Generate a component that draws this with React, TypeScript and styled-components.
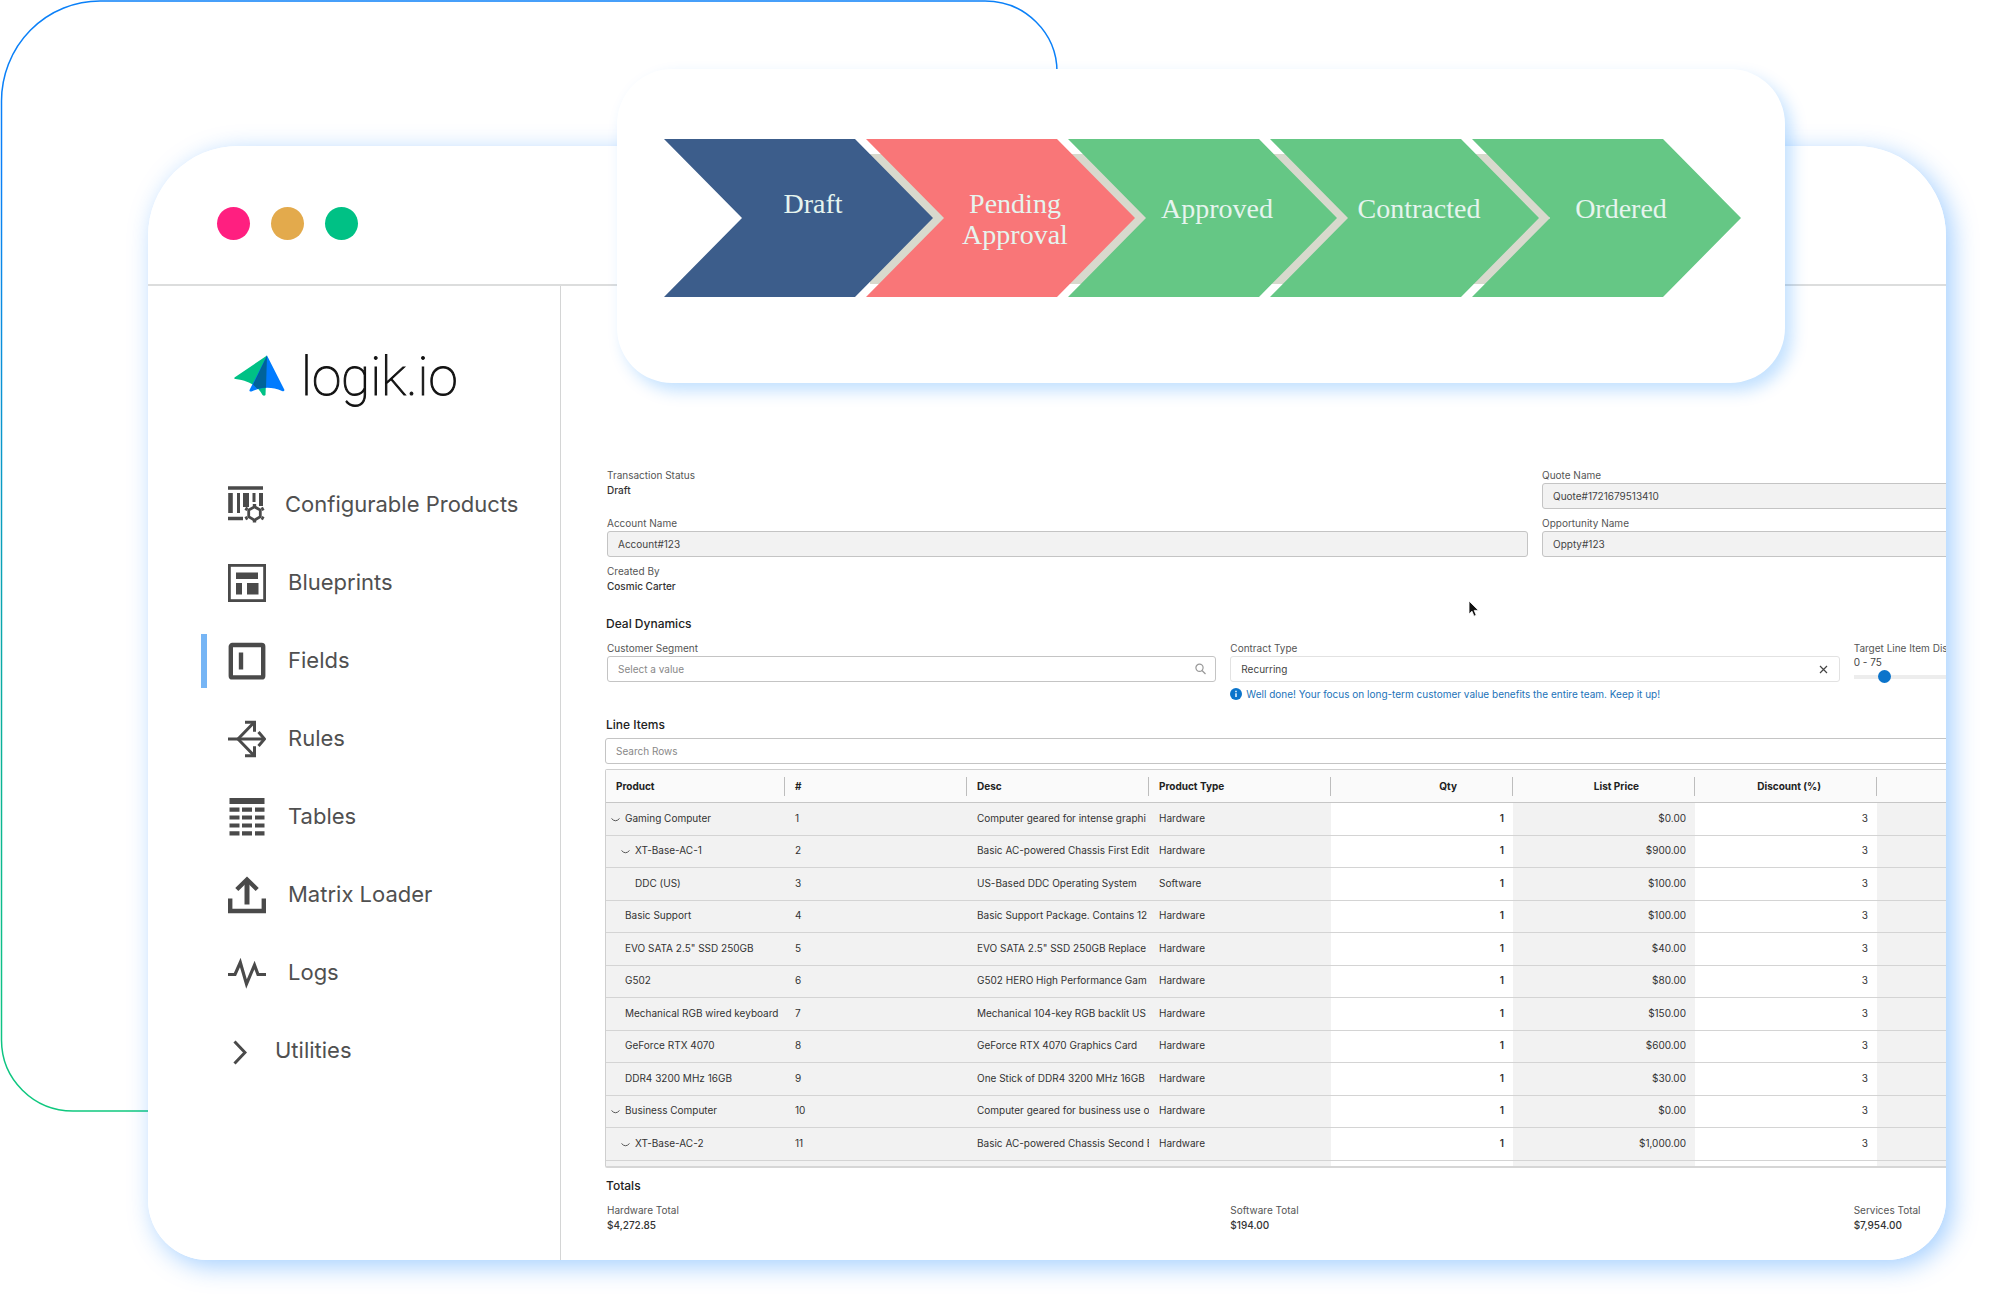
import React from "react";
import styled, { createGlobalStyle } from "styled-components";

const GlobalStyle = createGlobalStyle`
  *, *::before, *::after { box-sizing: border-box; }
  body { margin: 0; background: #fff; font-family: Inter, "Liberation Sans", sans-serif; color: #222; }
  h2, ol, ul, p, dl, dd { margin: 0; padding: 0; }
  ol, ul { list-style: none; }
`;

const Stage = styled.div`
  position: relative;
  padding: 146px 54px 53px 148px;
  overflow: hidden;
`;

const Outline = styled.svg`
  position: absolute;
  top: 0;
  left: 0;
  width: 1058px;
  height: 1112px;
`;

const Window = styled.div`
  position: relative;
  display: flex;
  flex-direction: column;
  overflow: hidden;
  background: #fff;
  border-radius: 90px 90px 60px 60px;
`;

const WindowShadow = styled.div`
  position: relative;
  border-radius: 90px 90px 60px 60px;
  box-shadow: 6px 6px 26px rgba(0, 122, 255, 0.37);
`;

const TitleBar = styled.header`
  display: flex;
  align-items: center;
  gap: 21px;
  height: 140px;
  padding: 17px 69px 0;
  border-bottom: 2px solid #dcdddd;
`;

const Light = styled.span<{ $color: string }>`
  width: 33px;
  height: 33px;
  border-radius: 50%;
  background: ${(p) => p.$color};
`;

const Body = styled.div`
  display: flex;
`;

const Sidebar = styled.aside`
  flex: 0 0 413px;
  border-right: 1px solid #d4d5d5;
`;

const Brand = styled.a`
  display: flex;
  align-items: flex-start;
  gap: 15px;
  height: 180px;
  padding: 61px 0 0 86px;
  color: #111;
  text-decoration: none;
`;

const BrandMark = styled.svg`
  width: 52px;
  height: 42px;
  margin-top: 8px;
`;

const BrandName = styled.span`
  font-family: Roboto, sans-serif;
  font-weight: 100;
  font-size: 53px;
  line-height: 60px;
  -webkit-text-stroke: 1px #111;
`;

const NavItem = styled.a<{ $active?: boolean; $gap: number; $indent: number }>`
  position: relative;
  display: flex;
  align-items: center;
  gap: ${(p) => p.$gap}px;
  height: 78px;
  padding-left: ${(p) => p.$indent}px;
  color: #505050;
  font-size: 22px;
  font-weight: 400;
  text-decoration: none;

  &::before {
    content: "";
    position: absolute;
    left: 53px;
    width: 6px;
    height: 54px;
    background: ${(p) => (p.$active ? "#76b5f5" : "transparent")};
  }
`;

const NavLabel = styled.span`
  padding-bottom: 3px;
`;

const NavIcon = styled.svg<{ $w: number }>`
  flex: none;
  width: ${(p) => p.$w}px;
  height: 38px;
  fill: none;
  stroke: #4a4a4a;
`;

const Panel = styled.main`
  position: relative;
  flex: 1;
  min-width: 0;
  overflow: hidden;
  padding: 182px 0 27px 44px;
`;

const Sheet = styled.div`
  display: flex;
  flex-direction: column;
  width: 1860px;
`;

const Section = styled.section<{ $gap: number; $before: number }>`
  display: flex;
  flex-direction: column;
  gap: ${(p) => p.$gap}px;
  padding-top: ${(p) => p.$before}px;
`;

const SectionTitle = styled.h2`
  font-size: 12px;
  line-height: 20px;
  font-weight: 500;
  color: #222;
  padding-left: 1px;
`;

const FieldGrid = styled.div<{ $cols: number }>`
  display: grid;
  grid-template-columns: repeat(${(p) => p.$cols}, 1fr);
  gap: 7px 14px;
  padding: 0 2px;
`;

const Field = styled.div`
  display: flex;
  flex-direction: column;
  min-width: 0;
`;

const Label = styled.label`
  font-size: 10px;
  line-height: 15px;
  color: #555;
`;

const Value = styled.output`
  font-size: 10px;
  line-height: 15px;
  font-weight: 500;
  color: #333;
`;

const Box = styled.div<{ $tone: "locked" | "open" | "soft" }>`
  display: flex;
  align-items: center;
  height: 26px;
  padding: 0 9px 0 10px;
  border-radius: 3px;
  border: 1px solid ${(p) => (p.$tone === "soft" ? "#e2e2e2" : "#c4c4c4")};
  background: ${(p) => (p.$tone === "locked" ? "#f2f2f2" : "#fff")};
`;

const TextInput = styled.input`
  flex: 1;
  min-width: 0;
  height: 100%;
  padding: 0;
  border: 0;
  outline: 0;
  background: transparent;
  font: 10px Inter, sans-serif;
  color: #444;

  &::placeholder {
    color: #888;
    opacity: 1;
  }
`;

const IconButton = styled.button`
  display: flex;
  align-items: center;
  justify-content: center;
  width: 12px;
  height: 12px;
  padding: 0;
  border: 0;
  background: none;
`;

const Hint = styled.p`
  display: flex;
  align-items: center;
  gap: 4px;
  margin-top: 6px;
  font-size: 10px;
  line-height: 12px;
  color: #2273b9;
`;

const RangeText = styled.span`
  font-size: 10px;
  line-height: 12px;
  color: #444;
`;

const Slider = styled.input`
  appearance: none;
  width: 100%;
  height: 17px;
  margin: 0;
  background: linear-gradient(#ededed, #ededed) center / 100% 4px no-repeat;

  &::-webkit-slider-thumb {
    appearance: none;
    width: 13px;
    height: 13px;
    border-radius: 50%;
    background: #0b74cb;
  }
`;

const TableFrame = styled.div`
  margin-top: 2px;
  border: 1px solid #cfcfcf;
  border-bottom: 2px solid #d6d6d6;
  border-radius: 2px;
`;

const Table = styled.table`
  width: 100%;
  table-layout: fixed;
  border-collapse: separate;
  border-spacing: 0;
  font-size: 10px;
`;

const HeadCell = styled.th<{ $numeric?: boolean; $last?: boolean }>`
  height: 33px;
  padding: 0 ${(p) => (p.$numeric ? 56 : 10)}px 0 10px;
  border-bottom: 1px solid #c6c6c6;
  background: ${(p) =>
      p.$last ? "none" : "linear-gradient(#bdbdbd, #bdbdbd) right center / 1px 19px no-repeat"},
    #fafafa;
  font-weight: 700;
  color: #222;
  text-align: ${(p) => (p.$numeric ? "right" : "left")};
`;

const Row = styled.tr`
  height: 33px;
  &:nth-child(even) { height: 32px; }
  &:nth-child(12) { height: 5px; }
  &:nth-child(12) td { border: 0; padding: 0; }
`;

const Cell = styled.td<{ $editable?: boolean; $numeric?: boolean; $strong?: boolean }>`
  padding: 0 ${(p) => (p.$numeric ? 9 : 0)}px 3px ${(p) => (p.$numeric ? 0 : 10)}px;
  overflow: hidden;
  white-space: nowrap;
  border-bottom: 1px solid #d4d4d4;
  background: ${(p) => (p.$editable ? "#fff" : "#f2f2f2")};
  color: #333;
  font-weight: ${(p) => (p.$strong ? 600 : 400)};
  text-align: ${(p) => (p.$numeric ? "right" : "left")};
`;

const ProductCell = styled(Cell)`
  padding-left: 5px;
`;

const Product = styled.span<{ $level: number }>`
  display: flex;
  align-items: center;
  gap: 5px;
  padding-left: ${(p) => p.$level * 10}px;
`;

const Toggle = styled.button`
  display: flex;
  width: 9px;
  height: 10px;
  padding: 0;
  border: 0;
  background: none;
`;

const ToggleSpace = styled.span`
  width: 9px;
`;

const Pointer = styled.svg`
  position: absolute;
  top: 314px;
  left: 907px;
  width: 12px;
  height: 18px;
`;

const StageCard = styled.div`
  position: absolute;
  top: 69px;
  left: 617px;
  right: 215px;
  height: 314px;
  padding: 70px 44px 0 47px;
  border-radius: 55px;
  background: #fff;
  box-shadow: 7px 8px 16px rgba(0, 130, 255, 0.24);
`;

const Stages = styled.ol`
  display: flex;
  height: 158px;
  background: linear-gradient(#d8d9cd, #d8d9cd) 206px 15px / calc(100% - 398px) 130px no-repeat;
`;

const StageStep = styled.li<{ $color: string; $top: number }>`
  flex: 1;
  padding: ${(p) => p.$top}px 0 0 29px;
  background: ${(p) => p.$color};
  clip-path: polygon(0 0, calc(100% - 78px) 0, 100% 50%, calc(100% - 78px) 100%, 0 100%, 78px 50%);
  color: #e6f4ee;
  font: 28px/31px "Liberation Serif", serif;
  text-align: center;
  white-space: pre-line;

  & + & { margin-left: -67px; }
`;

const ProductsIcon = () => (
  <NavIcon $w={38} viewBox="0 0 38 38" strokeWidth={3}>
    <path d="M0 2h35M0 32.5h15" strokeWidth={3.6} />
    <path d="M2.5 7v20" strokeWidth={4.6} />
    <path d="M10.500 7v20M26 7v9" strokeWidth={3} />
    <path d="M18 7v14" strokeWidth={6} />
    <path d="M33 7v13" strokeWidth={4} />
    <path d="M26.500 20.500v-2.500M26.500 36.500v-2.500M19.500 23.500l-2.200-1.200M33.500 23.500l2.200-1.200M19.500 31.500l-2.200 1.200M33.500 31.500l2.200 1.200" strokeWidth={3.4} />
    <path d="M26.500 20.800l5.800 3.300v6.700l-5.800 3.300l-5.800-3.300v-6.700z" strokeWidth={2.800} fill="#fff" />
  </NavIcon>
);

const BlueprintsIcon = () => (
  <NavIcon $w={38} viewBox="0 0 38 38" strokeWidth={2.800}>
    <rect x="1.400" y="1.400" width="35.200" height="35.200" />
    <g fill="#4a4a4a" stroke="none">
      <rect x="8" y="8.500" width="22" height="6.500" />
      <rect x="8" y="19" width="6" height="11.500" />
      <rect x="19" y="19" width="11.500" height="11.500" />
    </g>
  </NavIcon>
);

const FieldsIcon = () => (
  <NavIcon $w={38} viewBox="0 0 38 38" strokeWidth={4.400}>
    <rect x="2.800" y="3" width="32.400" height="32.400" rx="1.500" />
    <path d="M13 10.500v17" />
  </NavIcon>
);

const RulesIcon = () => (
  <NavIcon $w={38} viewBox="0 0 38 38" strokeWidth={3}>
    <path d="M0 19h35" />
    <path d="M30.500 12l6 7l-6 7" />
    <path d="M10 19L26 2.500M10 19L26 35.500" />
    <path d="M17 2.200h9.500v9.500M17 35.800h9.500v-9.500" />
  </NavIcon>
);

const TablesIcon = () => (
  <NavIcon $w={38} viewBox="0 0 38 38" strokeWidth={4.200}>
    <path d="M1.500 3h35" strokeWidth={6} />
    {[11.700, 19.500, 27.500, 35.300].map((y) => (
      <path key={y} d={`M1.500 ${y}h10M14 ${y}h10M27 ${y}h9.500`} />
    ))}
  </NavIcon>
);

const LoaderIcon = () => (
  <NavIcon $w={38} viewBox="0 0 38 38" strokeWidth={4.400}>
    <path d="M2.200 22.500v12.500h33.600v-12.500" />
    <path d="M19 28.500V4" strokeWidth={5} />
    <path d="M8.800 13.500L19 3.500L29.200 13.500" strokeWidth={4.400} />
  </NavIcon>
);

const LogsIcon = () => (
  <NavIcon $w={38} viewBox="0 0 38 38" strokeWidth={3.200}>
    <path d="M0 20.500h7l5.300-12l6.200 21.500l8-19l3.500 9.500h8" />
  </NavIcon>
);

const UtilitiesIcon = () => (
  <NavIcon $w={14} viewBox="0 0 14 38" strokeWidth={3}>
    <path d="M1.500 9.500l10.500 11l-10.500 11" />
  </NavIcon>
);

const NAV = [
  { label: "Configurable Products", Icon: ProductsIcon, gap: 19, indent: 80 },
  { label: "Blueprints", Icon: BlueprintsIcon, gap: 22, indent: 80 },
  { label: "Fields", Icon: FieldsIcon, gap: 22, indent: 80, active: true },
  { label: "Rules", Icon: RulesIcon, gap: 22, indent: 80 },
  { label: "Tables", Icon: TablesIcon, gap: 22, indent: 80 },
  { label: "Matrix Loader", Icon: LoaderIcon, gap: 22, indent: 80 },
  { label: "Logs", Icon: LogsIcon, gap: 22, indent: 80 },
  { label: "Utilities", Icon: UtilitiesIcon, gap: 28, indent: 85 },
];

const STAGES = [
  { label: "Draft", color: "#3c5d8b", top: 49 },
  { label: "Pending\nApproval", color: "#f97678", top: 49 },
  { label: "Approved", color: "#65c785", top: 54 },
  { label: "Contracted", color: "#65c785", top: 54 },
  { label: "Ordered", color: "#65c785", top: 54 },
];

type Item = { name: string; level: number; open?: boolean; desc: string; type: string; price: string };

const ITEMS: Item[] = [
  { name: "Gaming Computer", level: 0, open: true, desc: "Computer geared for intense graphi", type: "Hardware", price: "$0.00" },
  { name: "XT-Base-AC-1", level: 1, open: true, desc: "Basic AC-powered Chassis First Edit", type: "Hardware", price: "$900.00" },
  { name: "DDC (US)", level: 1, desc: "US-Based DDC Operating System", type: "Software", price: "$100.00" },
  { name: "Basic Support", level: 0, desc: "Basic Support Package. Contains 12", type: "Hardware", price: "$100.00" },
  { name: 'EVO SATA 2.5" SSD 250GB', level: 0, desc: 'EVO SATA 2.5" SSD 250GB Replace', type: "Hardware", price: "$40.00" },
  { name: "G502", level: 0, desc: "G502 HERO High Performance Gam", type: "Hardware", price: "$80.00" },
  { name: "Mechanical RGB wired keyboard", level: 0, desc: "Mechanical 104-key RGB backlit US", type: "Hardware", price: "$150.00" },
  { name: "GeForce RTX 4070", level: 0, desc: "GeForce RTX 4070 Graphics Card", type: "Hardware", price: "$600.00" },
  { name: "DDR4 3200 MHz 16GB", level: 0, desc: "One Stick of DDR4 3200 MHz 16GB", type: "Hardware", price: "$30.00" },
  { name: "Business Computer", level: 0, open: true, desc: "Computer geared for business use o", type: "Hardware", price: "$0.00" },
  { name: "XT-Base-AC-2", level: 1, open: true, desc: "Basic AC-powered Chassis Second E", type: "Hardware", price: "$1,000.00" },
];

const TOTALS = [
  { label: "Hardware Total", value: "$4,272.85" },
  { label: "Software Total", value: "$194.00" },
  { label: "Services Total", value: "$7,954.00" },
];

const ReadOnlyField = ({ id, label, value }: { id: string; label: string; value: string }) => (
  <Field>
    <Label htmlFor={id}>{label}</Label>
    <Box $tone="locked">
      <TextInput id={id} defaultValue={value} readOnly />
    </Box>
  </Field>
);

const ValueField = ({ id, label, value }: { id: string; label: string; value: string }) => (
  <Field>
    <Label htmlFor={id}>{label}</Label>
    <Value id={id}>{value}</Value>
  </Field>
);

export default function App() {
  return (
    <>
      <GlobalStyle />
      <Stage>
        <Outline viewBox="0 0 1058 1112" fill="none" aria-hidden="true">
          <defs>
            <linearGradient id="edge" gradientUnits="userSpaceOnUse" x1="0" y1="0" x2="0" y2="1112">
              <stop offset="0.15" stopColor="#0a80f8" />
              <stop offset="0.7" stopColor="#0ab394" />
              <stop offset="1" stopColor="#0fc87e" />
            </linearGradient>
          </defs>
          <path
            d="M1057 80V72A72 71 0 0 0 985 1H100A98.500 100 0 0 0 1.500 101V1040A71.500 71 0 0 0 73 1111H160"
            stroke="url(#edge)"
            strokeWidth="1.500"
          />
        </Outline>

        <WindowShadow>
          <Window>
            <TitleBar>
              <Light $color="#ff1f80" />
              <Light $color="#e3aa4c" />
              <Light $color="#00c185" />
            </TitleBar>
            <Body>
              <Sidebar>
                <Brand href="#home">
                  <BrandMark viewBox="0 0 52 42" aria-hidden="true">
                    <path d="M33 0.500L0.500 22.500Q0 24 1.500 24C14 25.500 23 30 28.500 40Q30 41.500 31.500 40Z" fill="#00c185" />
                    <path d="M33 0.500L50.500 35Q50 37 48 36C38 31.500 28 31.500 17.500 36.500Q15 37 15.500 35Z" fill="#007bff" />
                    <path d="M33 0.500L19 29.500L23.500 34Q28 32.800 32 32.800Z" fill="#00639a" />
                  </BrandMark>
                  <BrandName>logik.io</BrandName>
                </Brand>
                <nav aria-label="Admin">
                  {NAV.map(({ label, Icon, gap, indent, active }) => (
                    <NavItem
                      key={label}
                      href={`#${label.toLowerCase().replace(" ", "-")}`}
                      $active={active}
                      $gap={gap}
                      $indent={indent}
                      aria-current={active ? "page" : undefined}
                    >
                      <Icon />
                      <NavLabel>{label}</NavLabel>
                    </NavItem>
                  ))}
                </nav>
              </Sidebar>

              <Panel>
                <Sheet>
                  <Section $gap={0} $before={0} aria-label="Transaction">
                    <FieldGrid $cols={2}>
                      <ValueField id="status" label="Transaction Status" value="Draft" />
                      <ReadOnlyField id="quote" label="Quote Name" value="Quote#1721679513410" />
                      <ReadOnlyField id="account" label="Account Name" value="Account#123" />
                      <ReadOnlyField id="opportunity" label="Opportunity Name" value="Oppty#123" />
                      <ValueField id="creator" label="Created By" value="Cosmic Carter" />
                    </FieldGrid>
                  </Section>

                  <Section $gap={7} $before={20}>
                    <SectionTitle>Deal Dynamics</SectionTitle>
                    <FieldGrid $cols={3}>
                      <Field>
                        <Label htmlFor="segment">Customer Segment</Label>
                        <Box $tone="open">
                          <TextInput id="segment" placeholder="Select a value" />
                          <svg width="11" height="12" viewBox="0 0 11 12" fill="none" stroke="#999" strokeWidth="1.200" aria-hidden="true">
                            <circle cx="4.500" cy="4.800" r="3.600" />
                            <path d="M7 7.500l3.500 3.500" />
                          </svg>
                        </Box>
                      </Field>
                      <Field>
                        <Label htmlFor="contract">Contract Type</Label>
                        <Box $tone="soft">
                          <TextInput id="contract" defaultValue="Recurring" />
                          <IconButton type="button" aria-label="Clear">
                            <svg width="9" height="9" viewBox="0 0 9 9" stroke="#444" strokeWidth="1.200">
                              <path d="M1 1l7 7M8 1l-7 7" />
                            </svg>
                          </IconButton>
                        </Box>
                        <Hint>
                          <svg width="12" height="12" viewBox="0 0 12 12" aria-hidden="true">
                            <circle cx="6" cy="6" r="6" fill="#0b74cb" />
                            <path d="M6 5.200v3.800M6 2.800v1.400" stroke="#fff" strokeWidth="1.400" />
                          </svg>
                          Well done! Your focus on long-term customer value benefits the entire team. Keep it up!
                        </Hint>
                      </Field>
                      <Field>
                        <Label htmlFor="discount">Target Line Item Discount</Label>
                        <RangeText>0 - 75</RangeText>
                        <Slider id="discount" type="range" min={0} max={75} defaultValue={3} />
                      </Field>
                    </FieldGrid>
                  </Section>

                  <Section $gap={3} $before={15}>
                    <SectionTitle>Line Items</SectionTitle>
                    <Box $tone="open">
                      <TextInput type="text" aria-label="Search Rows" placeholder="Search Rows" />
                    </Box>
                    <TableFrame>
                      <Table>
                        <colgroup>
                          <col width="179" />
                          <col width="182" />
                          <col width="182" />
                          <col width="182" />
                          <col width="182" />
                          <col width="182" />
                          <col width="182" />
                          <col />
                        </colgroup>
                        <thead>
                          <tr>
                            <HeadCell>Product</HeadCell>
                            <HeadCell>#</HeadCell>
                            <HeadCell>Desc</HeadCell>
                            <HeadCell>Product Type</HeadCell>
                            <HeadCell $numeric>Qty</HeadCell>
                            <HeadCell $numeric>List Price</HeadCell>
                            <HeadCell $numeric>Discount (%)</HeadCell>
                            <HeadCell $last />
                          </tr>
                        </thead>
                        <tbody>
                          {ITEMS.map((item, i) => (
                            <Row key={item.name}>
                              <ProductCell>
                                <Product $level={item.level}>
                                  {item.open ? (
                                    <Toggle type="button" aria-label={`Collapse ${item.name}`}>
                                      <svg width="9" height="10" viewBox="0 0 9 10" fill="none" stroke="#555">
                                        <path d="M0.500 5.500Q4.500 10 8.500 5.500" />
                                      </svg>
                                    </Toggle>
                                  ) : (
                                    <ToggleSpace />
                                  )}
                                  {item.name}
                                </Product>
                              </ProductCell>
                              <Cell>{i + 1}</Cell>
                              <Cell>{item.desc}</Cell>
                              <Cell>{item.type}</Cell>
                              <Cell $editable $numeric $strong>1</Cell>
                              <Cell $numeric>{item.price}</Cell>
                              <Cell $editable $numeric>3</Cell>
                              <Cell />
                            </Row>
                          ))}
                          <Row aria-hidden="true">
                            <Cell />
                            <Cell />
                            <Cell />
                            <Cell />
                            <Cell $editable />
                            <Cell />
                            <Cell $editable />
                            <Cell />
                          </Row>
                        </tbody>
                      </Table>
                    </TableFrame>
                  </Section>

                  <Section $gap={7} $before={8}>
                    <SectionTitle>Totals</SectionTitle>
                    <FieldGrid $cols={3}>
                      {TOTALS.map((t) => (
                        <ValueField key={t.label} id={t.label.toLowerCase().replace(" ", "-")} label={t.label} value={t.value} />
                      ))}
                    </FieldGrid>
                  </Section>
                </Sheet>
                <Pointer viewBox="0 0 12 18" aria-hidden="true">
                  <path d="M1 1v13l3-2.800l2 5l2.200-1l-2-4.800h4.300z" fill="#111" stroke="#fff" strokeWidth="0.800" />
                </Pointer>
              </Panel>
            </Body>
          </Window>
        </WindowShadow>

        <StageCard>
          <Stages>
            {STAGES.map((s) => (
              <StageStep key={s.label} $color={s.color} $top={s.top}>
                {s.label}
              </StageStep>
            ))}
          </Stages>
        </StageCard>
      </Stage>
    </>
  );
}
